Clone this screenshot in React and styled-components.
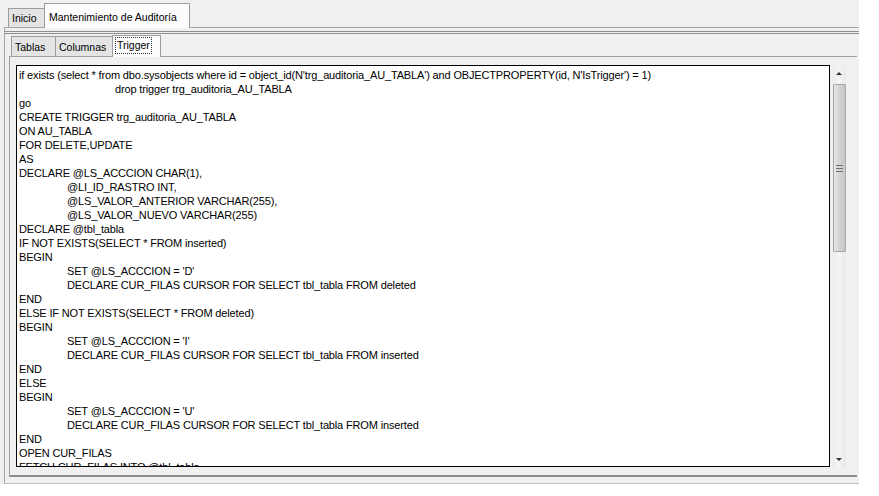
import React from "react";
import styled, { createGlobalStyle } from "styled-components";

const GlobalStyle = createGlobalStyle`
  html, body {
    margin: 0;
    padding: 0;
    background: #ffffff;
  }
  body {
    font-family: "Liberation Sans", Arial, sans-serif;
  }
`;

const Window = styled.div`
  width: 859px;
  height: 484px;
  background: #f0f0f0;
  display: flex;
  flex-direction: column;
  box-sizing: border-box;
`;

const TabStrip = styled.div`
  display: flex;
  align-items: flex-end;
  height: ${(p) => p.$height}px;
  padding-left: ${(p) => p.$indent}px;
  flex-shrink: 0;
`;

const Tab = styled.div`
  position: relative;
  z-index: ${(p) => (p.$active ? 2 : 1)};
  box-sizing: border-box;
  width: ${(p) => p.$w}px;
  height: ${(p) => (p.$active ? p.$tall : p.$short)}px;
  margin-bottom: ${(p) => (p.$active ? -1 : 0)}px;
  margin-left: -1px;
  padding: 0 0 ${(p) => (p.$active ? 5 : 3)}px ${(p) => p.$pad}px;
  display: flex;
  align-items: flex-end;
  font-size: 10.5px;
  color: #000;
  background: ${(p) => (p.$active ? "#fcfcfc" : "#e4e4e4")};
  border: 1px solid #9c9c9c;
  border-bottom: none;
  white-space: nowrap;
`;

const Focus = styled.span`
  outline: 1px dotted #333;
  outline-offset: 1px;
  line-height: 13px;
`;

const OuterPanel = styled.div`
  flex: 1;
  display: flex;
  flex-direction: column;
  margin-left: 4px;
  border-top: 1px solid #a3a3a3;
  border-left: 1px solid #a8a8a8;
  border-bottom: 1px solid #c2c2c2;
  padding: 3px 0 6px;
  min-height: 0;
`;

const InnerControl = styled.div`
  flex: 1;
  display: flex;
  flex-direction: column;
  border-top: 3px double #8e8e8e;
  min-height: 0;
`;

const InnerPanel = styled.div`
  flex: 1;
  display: flex;
  margin: 0 2px 0 4px;
  padding: 8px 11px 7px 6px;
  border-top: 1px solid #a0a0a0;
  border-left: 1px solid #9a9a9a;
  border-bottom: 2px solid #8c8c8c;
  min-height: 0;
`;

const Editor = styled.div`
  width: 814px;
  height: 402px;
  border: 1px solid #000;
  background: #ffffff;
  overflow: hidden;
  padding: 2px 0 0 2px;
  box-sizing: border-box;
  flex-shrink: 0;
`;

const CodeLine = styled.div`
  font-size: 11px;
  letter-spacing: -0.15px;
  line-height: 14px;
  height: 14px;
  color: #000;
  white-space: pre;
  padding-left: ${(p) => p.$indent * 48}px;
`;

const ScrollBar = styled.div`
  width: 14px;
  height: 402px;
  margin-left: 2px;
  display: flex;
  flex-direction: column;
  align-items: center;
  background: linear-gradient(90deg, #ececec 0%, #f4f4f4 45%, #e8e8e8 100%);
`;

const Arrow = styled.div`
  width: 0;
  height: 0;
  margin: ${(p) => (p.$down ? "auto 0 6px" : "7px 0 9px")};
  border-left: 3px solid transparent;
  border-right: 3px solid transparent;
  ${(p) =>
    p.$down ? "border-top: 3px solid #333;" : "border-bottom: 3px solid #333;"}
`;

const Thumb = styled.div`
  width: 13px;
  height: 168px;
  box-sizing: border-box;
  border: 1px solid #a9a9a9;
  border-radius: 1px;
  background: linear-gradient(90deg, #e6e6e6 0%, #d2d2d2 50%, #c6c6c6 100%);
  display: flex;
  flex-direction: column;
  align-items: center;
  justify-content: center;
  gap: 2px;
`;

const Grip = styled.div`
  width: 7px;
  height: 1px;
  background: #6f6f6f;
`;

const code = [
  [0, "if exists (select * from dbo.sysobjects where id = object_id(N'trg_auditoria_AU_TABLA') and OBJECTPROPERTY(id, N'IsTrigger') = 1)"],
  [2, "drop trigger trg_auditoria_AU_TABLA"],
  [0, "go"],
  [0, "CREATE TRIGGER trg_auditoria_AU_TABLA"],
  [0, "ON AU_TABLA"],
  [0, "FOR DELETE,UPDATE"],
  [0, "AS"],
  [0, "DECLARE @LS_ACCCION CHAR(1),"],
  [1, "@LI_ID_RASTRO INT,"],
  [1, "@LS_VALOR_ANTERIOR VARCHAR(255),"],
  [1, "@LS_VALOR_NUEVO VARCHAR(255)"],
  [0, "DECLARE @tbl_tabla"],
  [0, "IF NOT EXISTS(SELECT * FROM inserted)"],
  [0, "BEGIN"],
  [1, "SET @LS_ACCCION = 'D'"],
  [1, "DECLARE CUR_FILAS CURSOR FOR SELECT tbl_tabla FROM deleted"],
  [0, "END"],
  [0, "ELSE IF NOT EXISTS(SELECT * FROM deleted)"],
  [0, "BEGIN"],
  [1, "SET @LS_ACCCION = 'I'"],
  [1, "DECLARE CUR_FILAS CURSOR FOR SELECT tbl_tabla FROM inserted"],
  [0, "END"],
  [0, "ELSE"],
  [0, "BEGIN"],
  [1, "SET @LS_ACCCION = 'U'"],
  [1, "DECLARE CUR_FILAS CURSOR FOR SELECT tbl_tabla FROM inserted"],
  [0, "END"],
  [0, "OPEN CUR_FILAS"],
  [0, "FETCH CUR_FILAS INTO @tbl_tabla"],
];

export default function App() {
  return (
    <>
      <GlobalStyle />
      <Window>
        <TabStrip $height={27} $indent={9}>
          <Tab $w={37} $pad={3} $short={19} $tall={25}>Inicio</Tab>
          <Tab $active $w={146} $pad={4} $short={19} $tall={25}>
            Mantenimiento de Auditoría
          </Tab>
        </TabStrip>
        <OuterPanel>
          <InnerControl>
            <TabStrip $height={22} $indent={7}>
              <Tab $w={45} $pad={3} $short={20} $tall={22}>Tablas</Tab>
              <Tab $w={58} $pad={3} $short={20} $tall={22}>Columnas</Tab>
              <Tab $active $w={49} $pad={4} $short={20} $tall={22}>
                <Focus>Trigger</Focus>
              </Tab>
            </TabStrip>
            <InnerPanel>
              <Editor>
                {code.map(([indent, text], i) => (
                  <CodeLine key={i} $indent={indent}>
                    {text}
                  </CodeLine>
                ))}
              </Editor>
              <ScrollBar>
                <Arrow />
                <Thumb>
                  <Grip />
                  <Grip />
                  <Grip />
                </Thumb>
                <Arrow $down />
              </ScrollBar>
            </InnerPanel>
          </InnerControl>
        </OuterPanel>
      </Window>
    </>
  );
}
